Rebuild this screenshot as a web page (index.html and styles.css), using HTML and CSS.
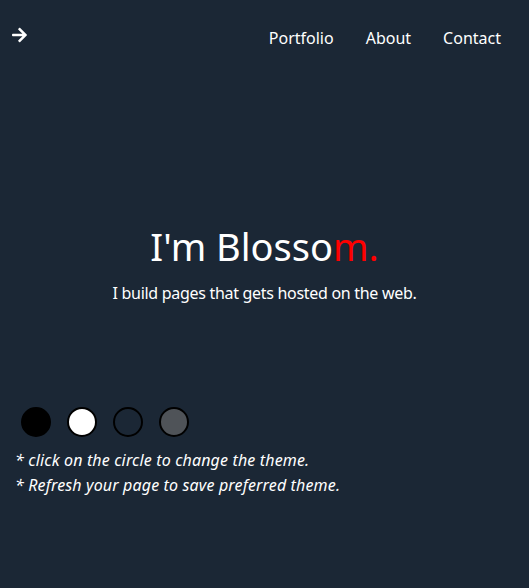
FILE: index.html
```html
<!DOCTYPE html>
<html lang="en">
<head>
<meta charset="utf-8">
<title>Blossom</title>
<link rel="stylesheet" href="styles.css">
</head>
<body>
<header class="topbar">
  <a class="back" href="#" aria-label="Go">
    <svg width="15" height="16" viewBox="0 0 448 480"><path fill="#fff" d="M190.5 50.9l22.2-22.2c9.4-9.4 24.6-9.4 33.9 0L441 223c9.4 9.4 9.4 24.6 0 33.9L246.6 451.3c-9.4 9.4-24.6 9.4-33.9 0l-22.2-22.2c-9.5-9.5-9.3-25 .4-34.3L311.4 280H24c-13.3 0-24-10.7-24-24v-32c0-13.3 10.7-24 24-24h287.4L190.9 85.2c-9.8-9.3-10-24.8-.4-34.3z"/></svg>
  </a>
  <nav class="nav">
    <a href="#">Portfolio</a>
    <a href="#">About</a>
    <a href="#">Contact</a>
  </nav>
</header>
<main class="hero">
  <h1 class="title">I'm Blosso<span class="accent">m.</span></h1>
  <p class="subtitle">I build pages that gets hosted on the web.</p>
</main>
<section class="themes">
  <div class="swatches">
    <span class="dot dot-black"></span>
    <span class="dot dot-white"></span>
    <span class="dot dot-navy"></span>
    <span class="dot dot-grey"></span>
  </div>
  <p class="note">* click on the circle to change the theme.</p>
  <p class="note">* Refresh your page to save preferred theme.</p>
</section>
</body>
</html>
```
FILE: styles.css
```css
* { box-sizing: border-box; }
html, body { height: 100%; }
body {
  margin: 0;
  background: #1b2735;
  color: #ffffff;
  font-family: "Noto Sans", "Open Sans", sans-serif;
}
.topbar {
  display: flex;
  justify-content: space-between;
  align-items: center;
  padding: 26px 28px 0 12px;
  height: 50px;
}
.back { display: flex; color: #fff; margin-top: -6px; }
.nav { display: flex; gap: 32px; }
.nav a {
  color: #fff;
  text-decoration: none;
  font-size: 16px;
}
.hero {
  text-align: center;
  padding-top: 172px;
}
.title {
  margin: 0;
  font-weight: 400;
  font-size: 38px;
  line-height: 48px;
}
.accent { color: #ff0000; }
.subtitle {
  margin: 12px 0 0;
  font-size: 16px;
  line-height: 22px;
  letter-spacing: -0.3px;
}
.themes {
  padding: 103px 15px 0;
}
.swatches {
  display: flex;
  gap: 16px;
  padding-left: 6px;
  margin-bottom: 11px;
}
.dot {
  width: 30px;
  height: 30px;
  border-radius: 50%;
  border: 2px solid #000;
}
.dot-black { background: #000; }
.dot-white { background: #fff; }
.dot-navy { background: #1b2735; }
.dot-grey { background: #4f5358; }
.note {
  margin: 0;
  font-style: italic;
  font-size: 16px;
  line-height: 25px;
  letter-spacing: 0.15px;
}
```
